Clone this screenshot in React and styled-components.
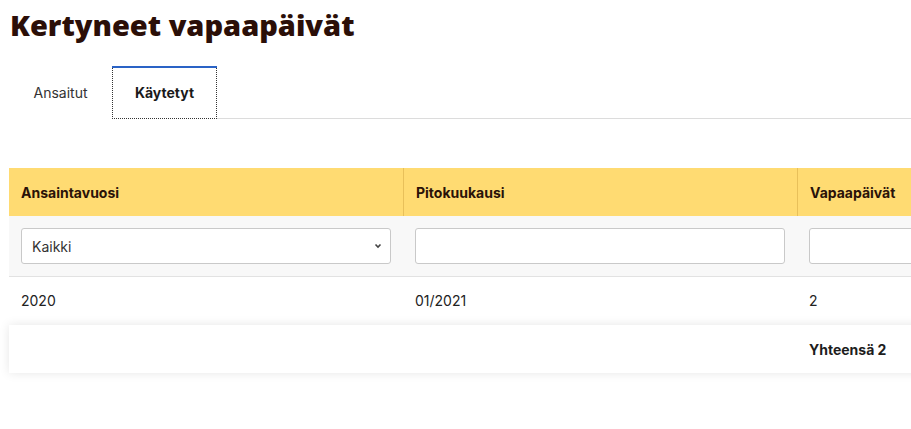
import styled, { createGlobalStyle } from 'styled-components';
import { useState } from 'react';

const GlobalStyle = createGlobalStyle`
  html {
    overflow: hidden;
  }
  body {
    margin: 0;
    padding: 0;
    background: #fff;
    font-family: Inter, "Noto Sans", sans-serif;
    color: #222;
  }
`;

const Page = styled.div`
  padding: 0 0 40px 9px;
  width: 1300px;
`;

const Title = styled.h1`
  font-family: "Open Sans", "Noto Sans", sans-serif;
  font-weight: 800;
  font-size: 29px;
  color: #2b0f08;
  margin: 0;
  padding: 5px 0 0 1px;
  line-height: 40px;
`;

const Tabs = styled.div`
  display: flex;
  margin-top: 21px;
  border-bottom: 1px solid #dcdcdc;
  width: 902px;
`;

const Tab = styled.button`
  position: relative;
  font-family: Inter, "Noto Sans", sans-serif;
  font-size: 14px;
  font-weight: ${p => (p.active ? 700 : 400)};
  color: ${p => (p.active ? '#1a1a1a' : '#333')};
  background: #fff;
  height: 53px;
  width: ${p => (p.active ? '105px' : '103px')};
  padding: 0;
  border: none;
  outline: ${p => (p.active ? '1px dotted #333' : 'none')};
  outline-offset: -1px;
  margin-bottom: -1px;
  cursor: pointer;

  &::before {
    content: '';
    display: ${p => (p.active ? 'block' : 'none')};
    position: absolute;
    left: 0;
    right: 0;
    top: 0;
    height: 2px;
    background: #2a63c6;
  }
`;

const Table = styled.div`
  margin-top: 49px;
  width: 1182px;
`;

const HeadRow = styled.div`
  display: grid;
  grid-template-columns: repeat(3, 394px);
  background: #ffdb72;
  height: 48px;
`;

const HeadCell = styled.div`
  display: flex;
  align-items: center;
  padding: 0 12px;
  font-size: 14px;
  font-weight: 700;
  color: #2a1208;
  border-left: ${p => (p.first ? 'none' : '1px solid #e8c05a')};
`;

const FilterRow = styled.div`
  display: grid;
  grid-template-columns: repeat(3, 394px);
  background: #f8f8f8;
  height: 60px;
  border-bottom: 1px solid #e2e2e2;
`;

const FilterCell = styled.div`
  display: flex;
  align-items: center;
  padding: 0 12px;
`;

const SelectBox = styled.div`
  position: relative;
  width: 100%;
`;

const Select = styled.select`
  appearance: none;
  width: 100%;
  height: 36px;
  border: 1px solid #c9c9c9;
  border-radius: 3px;
  background: #fff;
  font-family: Inter, "Noto Sans", sans-serif;
  font-size: 14px;
  color: #333;
  padding: 0 10px;
`;

const Chevron = styled.svg`
  position: absolute;
  right: 9px;
  top: 15px;
  pointer-events: none;
`;

const Input = styled.input`
  width: 100%;
  height: 36px;
  box-sizing: border-box;
  border: 1px solid #c9c9c9;
  border-radius: 3px;
  background: #fff;
`;

const DataRow = styled.div`
  display: grid;
  grid-template-columns: repeat(3, 394px);
  height: 46px;
  align-items: center;
  font-size: 14px;
  color: #222;
`;

const Cell = styled.div`
  padding: 0 12px;
`;

const Footer = styled.div`
  display: grid;
  grid-template-columns: repeat(3, 394px);
  height: 48px;
  margin-top: 2px;
  align-items: center;
  background: #fff;
  box-shadow: 0 0 10px rgba(0, 0, 0, 0.1);
  font-size: 14px;
  font-weight: 700;
  color: #1d1d1d;
`;

export default function App() {
  const [tab, setTab] = useState('kaytetyt');
  return (
    <Page>
      <GlobalStyle />
      <Title>Kertyneet vapaapäivät</Title>
      <Tabs>
        <Tab active={tab === 'ansaitut'} onClick={() => setTab('ansaitut')}>Ansaitut</Tab>
        <Tab active={tab === 'kaytetyt'} onClick={() => setTab('kaytetyt')}>Käytetyt</Tab>
      </Tabs>
      <Table>
        <HeadRow>
          <HeadCell first>Ansaintavuosi</HeadCell>
          <HeadCell>Pitokuukausi</HeadCell>
          <HeadCell>Vapaapäivät</HeadCell>
        </HeadRow>
        <FilterRow>
          <FilterCell>
            <SelectBox>
              <Select defaultValue="all">
                <option value="all">Kaikki</option>
                <option value="2020">2020</option>
              </Select>
              <Chevron width="8" height="6" viewBox="0 0 8 6">
                <path d="M1.5 1.5 L4 4 L6.5 1.5" fill="none" stroke="#444" strokeWidth="1.6" />
              </Chevron>
            </SelectBox>
          </FilterCell>
          <FilterCell><Input /></FilterCell>
          <FilterCell><Input /></FilterCell>
        </FilterRow>
        <DataRow>
          <Cell>2020</Cell>
          <Cell>01/2021</Cell>
          <Cell>2</Cell>
        </DataRow>
        <Footer>
          <Cell />
          <Cell />
          <Cell>Yhteensä 2</Cell>
        </Footer>
      </Table>
    </Page>
  );
}
